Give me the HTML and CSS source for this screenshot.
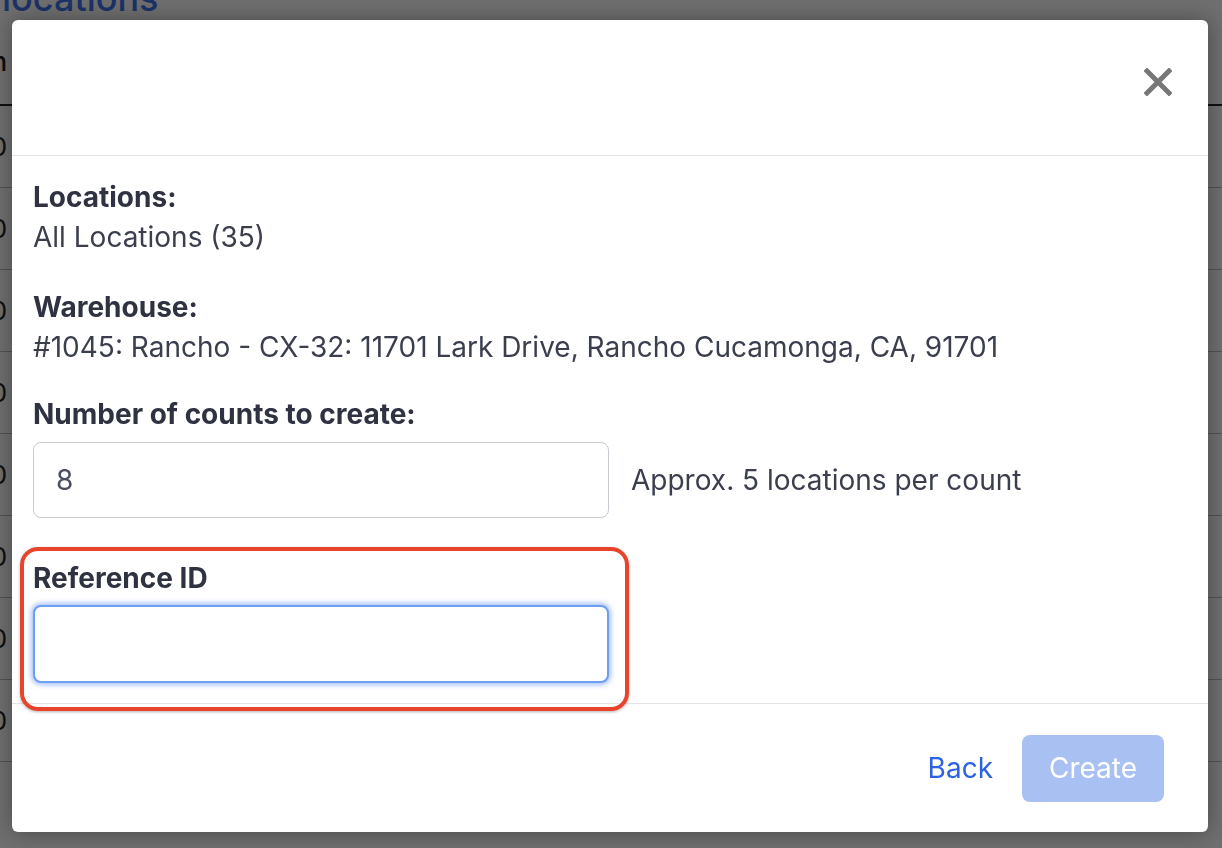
FILE: index.html
```html
<!DOCTYPE html>
<html lang="en">
<head>
  <meta charset="UTF-8">
  <meta name="viewport" content="width=device-width, initial-scale=1.0">
  <title>Create Counts</title>
  <link rel="stylesheet" href="styles.css">
</head>
<body>
  <div class="page">
    <h1 class="page-title">locations</h1>
    <table class="grid">
      <thead>
        <tr><th>Location</th><th></th><th></th></tr>
      </thead>
      <tbody>
        <tr><td>100</td><td></td><td></td></tr>
        <tr><td>100</td><td></td><td></td></tr>
        <tr><td>100</td><td></td><td></td></tr>
        <tr><td>100</td><td></td><td></td></tr>
        <tr><td>100</td><td></td><td></td></tr>
        <tr><td>100</td><td></td><td></td></tr>
        <tr><td>100</td><td></td><td></td></tr>
        <tr><td>100</td><td></td><td></td></tr>
      </tbody>
    </table>
  </div>

  <div class="backdrop"></div>

  <div class="modal">
    <div class="modal-header">
      <button class="close-btn" aria-label="Close">
        <svg width="28" height="28" viewBox="0 0 28 28">
          <path d="M3 3 L25 25 M25 3 L3 25" stroke="#777" stroke-width="5" stroke-linecap="square" fill="none"/>
        </svg>
      </button>
    </div>

    <div class="modal-body">
      <div class="field">
        <div class="field-label">Locations:</div>
        <div class="field-value">All Locations (35)</div>
      </div>

      <div class="field">
        <div class="field-label">Warehouse:</div>
        <div class="field-value">#1045: Rancho - CX-32: 11701 Lark Drive, Rancho Cucamonga, CA, 91701</div>
      </div>

      <div class="field field-count">
        <div class="field-label">Number of counts to create:</div>
        <div class="input-row">
          <input type="text" class="text-input" value="8">
          <span class="hint">Approx. 5 locations per count</span>
        </div>
      </div>

      <div class="field field-ref">
        <div class="field-label">Reference ID</div>
        <input type="text" class="text-input focused">
        <div class="highlight"></div>
      </div>
    </div>

    <div class="modal-footer">
      <a href="#" class="back-link">Back</a>
      <button class="create-btn" disabled>Create</button>
    </div>
  </div>
</body>
</html>
```

FILE: styles.css
```css
body {
  margin: 0;
  font-family: Inter, "Noto Sans", sans-serif;
  background-color: #fff;
  overflow: hidden;
}

.page {
  height: 848px;
}

.page-title {
  margin: -22px 0 0 2px;
  font-size: 36px;
  line-height: 40px;
  font-weight: 500;
  color: #3f74f0;
}

.grid {
  margin-left: -100px;
  width: calc(100% + 100px);
  border-collapse: collapse;
  font-size: 26px;
  color: #222;
}

.grid th {
  height: 86px;
  padding: 0;
  text-align: right;
  font-weight: 500;
  border-bottom: 2px solid #222;
}

.grid th:first-child,
.grid td:first-child {
  width: 107px;
  text-align: right;
}

.grid td {
  height: 81px;
  padding: 0;
  border-bottom: 1px solid #bcbcbc;
}

.backdrop {
  position: fixed;
  inset: 0;
  background-color: rgba(0, 0, 0, 0.57);
}

.modal {
  position: fixed;
  top: 20px;
  left: 12px;
  width: 1196px;
  height: 812px;
  background-color: #fff;
  border-radius: 6px;
  box-shadow: 0 0 22px rgba(0, 0, 0, 0.35);
  display: flex;
  flex-direction: column;
  color: #373a49;
}

.modal-header {
  box-sizing: border-box;
  height: 136px;
  padding: 48px 36px 0 0;
  display: flex;
  justify-content: flex-end;
  align-items: flex-start;
  border-bottom: 1px solid #e5e5e5;
}

.close-btn {
  width: 28px;
  height: 28px;
  padding: 0;
  border: none;
  background: none;
  cursor: pointer;
  display: flex;
}

.modal-body {
  flex: 1;
  padding: 21px 21px 0;
}

.field {
  font-size: 28px;
  line-height: 40px;
}

.field + .field {
  margin-top: 30px;
}

.field-label {
  font-weight: 700;
  color: #2f3241;
}

.field-value {
  color: #3b3e4d;
}

.field-count {
  margin-top: 27px !important;
}

.input-row {
  display: flex;
  align-items: center;
  margin-top: 8px;
}

.text-input {
  box-sizing: border-box;
  width: 576px;
  height: 76px;
  padding: 0 22px;
  font-family: inherit;
  font-size: 28px;
  color: #4a4f5e;
  border: 1px solid #c6cad1;
  border-radius: 8px;
  outline: none;
  background: #fff;
}

.hint {
  margin-left: 22px;
  color: #3b3e4d;
}

.field-ref {
  position: relative;
  width: 576px;
  margin-top: 40px !important;
}

.field-ref .text-input {
  display: block;
  margin-top: 7px;
  height: 78px;
}

.text-input.focused {
  border: 2px solid #6d9ff1;
  box-shadow: 0 0 5px 2px rgba(96, 140, 245, 0.55);
}

.highlight {
  position: absolute;
  top: -11px;
  left: -13px;
  right: -20px;
  bottom: -28px;
  border: 4px solid #e8432b;
  border-radius: 18px;
  box-shadow: 0 1px 3px rgba(0, 0, 0, 0.3);
  pointer-events: none;
  z-index: 2;
}

.modal-footer {
  box-sizing: border-box;
  height: 129px;
  border-top: 1px solid #e5e5e5;
  padding: 0 44px 0 0;
  display: flex;
  justify-content: flex-end;
  align-items: center;
  gap: 29px;
}

.back-link {
  font-size: 28px;
  color: #2b63e4;
  text-decoration: none;
}

.create-btn {
  width: 142px;
  height: 67px;
  font-family: inherit;
  font-size: 28px;
  color: #fff;
  background-color: #a9c0f3;
  border: none;
  border-radius: 8px;
}
```
